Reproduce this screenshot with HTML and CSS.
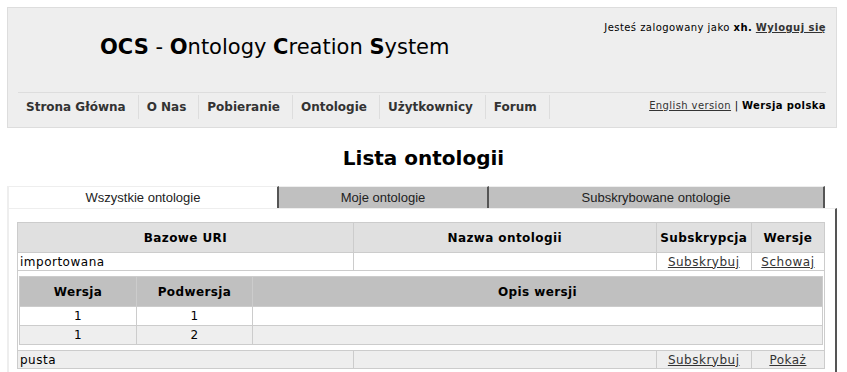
FILE: index.html
```html
<!DOCTYPE html>
<html lang="pl">
<head>
<meta charset="utf-8">
<title>OCS - Lista ontologii</title>
<link rel="stylesheet" href="styles.css">
</head>
<body>
<div class="header">
  <div class="top">
    <h1 class="logo"><b>OCS</b> - <b>O</b>ntology <b>C</b>reation <b>S</b>ystem</h1>
    <div class="login">Jesteś zalogowany jako <b>xh.</b> <a href="#">Wyloguj się</a></div>
  </div>
  <div class="navbar">
    <ul class="menu">
      <li><a href="#">Strona Główna</a></li>
      <li><a href="#">O Nas</a></li>
      <li><a href="#">Pobieranie</a></li>
      <li><a href="#">Ontologie</a></li>
      <li><a href="#">Użytkownicy</a></li>
      <li><a href="#">Forum</a></li>
    </ul>
    <div class="lang"><a href="#">English version</a> | <b>Wersja polska</b></div>
  </div>
</div>

<h2 class="page-title">Lista ontologii</h2>

<div class="tabs">
  <div class="tab tab-all active">Wszystkie ontologie</div>
  <div class="tab tab-mine">Moje ontologie</div>
  <div class="tab tab-sub">Subskrybowane ontologie</div>
</div>
<div class="panel">
  <table class="list">
    <colgroup>
      <col class="c-uri"><col class="c-name"><col class="c-sub"><col class="c-ver">
    </colgroup>
    <tr>
      <th>Bazowe URI</th>
      <th>Nazwa ontologii</th>
      <th>Subskrypcja</th>
      <th>Wersje</th>
    </tr>
    <tr>
      <td>importowana</td>
      <td></td>
      <td class="center"><a href="#">Subskrybuj</a></td>
      <td class="center"><a href="#">Schowaj</a></td>
    </tr>
    <tr>
      <td colspan="4" class="nested">
        <table class="versions">
          <colgroup>
            <col class="v-ver"><col class="v-sub"><col class="v-desc">
          </colgroup>
          <tr>
            <th>Wersja</th>
            <th>Podwersja</th>
            <th>Opis wersji</th>
          </tr>
          <tr>
            <td class="center">1</td>
            <td class="center">1</td>
            <td></td>
          </tr>
          <tr class="alt">
            <td class="center">1</td>
            <td class="center">2</td>
            <td></td>
          </tr>
        </table>
      </td>
    </tr>
    <tr class="alt">
      <td>pusta</td>
      <td></td>
      <td class="center"><a href="#">Subskrybuj</a></td>
      <td class="center"><a href="#">Pokaż</a></td>
    </tr>
  </table>
</div>
</body>
</html>
```

FILE: styles.css
```css
html, body {
  margin: 0;
  padding: 0;
  background: #fff;
}

body {
  font-family: "DejaVu Sans", Verdana, sans-serif;
  color: #222;
}

a {
  color: #333;
}

/* Header */
.header {
  margin: 7px 10px 0 7px;
  background: #eee;
  border: 1px solid #ddd;
  padding: 0 10px;
  height: 119px;
}

.top {
  display: flex;
  justify-content: space-between;
  align-items: flex-start;
  height: 84px;
  border-bottom: 1px solid #ddd;
}

.logo {
  margin: 27px 0 0 82px;
  font-size: 21px;
  line-height: 24px;
  font-weight: normal;
  color: #000;
}

.login {
  margin-top: 14px;
  font-size: 10px;
  line-height: 12px;
  letter-spacing: 0.45px;
  color: #000;
}

.login a {
  font-weight: bold;
}

.navbar {
  display: flex;
  justify-content: space-between;
  align-items: center;
}

.menu {
  list-style: none;
  margin: 2px 0 0;
  padding: 0;
  display: flex;
}

.menu li {
  border-right: 1px solid #ddd;
  padding: 0 12px 0 8px;
  height: 24px;
  line-height: 24px;
  font-size: 12px;
  font-weight: bold;
}

.menu li a {
  text-decoration: none;
  color: #333;
}

.lang {
  font-size: 10px;
  letter-spacing: 0.4px;
  margin-top: -2px;
  color: #000;
}

/* Title */
.page-title {
  margin: 18px 0 16px;
  text-align: center;
  font-size: 20px;
  line-height: 24px;
  color: #000;
}

/* Tabs */
.tabs {
  display: flex;
  margin-left: 7px;
  font-family: "Liberation Sans", Arial, sans-serif;
  font-size: 13px;
}

.tab {
  box-sizing: border-box;
  height: 22px;
  line-height: 21px;
  text-align: center;
  border-top: 1px solid #eee;
  border-right: 2px solid #555;
  background: #c0c0c0;
  color: #222;
}

.tab-all {
  width: 272px;
  border-left: 2px solid #eee;
  background: #fff;
}

.tab-mine {
  width: 210px;
}

.tab-sub {
  width: 336px;
}

.panel {
  margin: 0 10px 0 7px;
  border-left: 2px solid #eee;
  border-right: 2px solid #555;
  border-top: 1px solid #eee;
  padding: 13px 10px 0 8px;
  height: 200px;
}

/* Tables */
table {
  border-collapse: collapse;
  width: 100%;
}

.list {
  border: 1px solid #ccc;
  font-size: 12px;
}

.list th,
.list td {
  border: 1px solid #ccc;
}

.list th {
  background: #e0e0e0;
  height: 29px;
  padding: 0;
  font-size: 12px;
  letter-spacing: 0.4px;
  color: #000;
}

.list td {
  height: 17px;
  padding: 0 2px;
  line-height: 16px;
  letter-spacing: 0.5px;
  color: #000;
}

.list tr.alt td {
  background: #eee;
}

.center {
  text-align: center;
}

.c-uri { width: 335px; }
.c-name { width: 302px; }
.c-sub { width: 95px; }
.c-ver { width: 73px; }

.list td.nested {
  padding: 5px 1px;
}

.versions th {
  background: #c0c0c0;
}

.versions td {
  height: 18px;
  color: #000;
}

.v-ver { width: 117px; }
.v-sub { width: 116px; }
```
